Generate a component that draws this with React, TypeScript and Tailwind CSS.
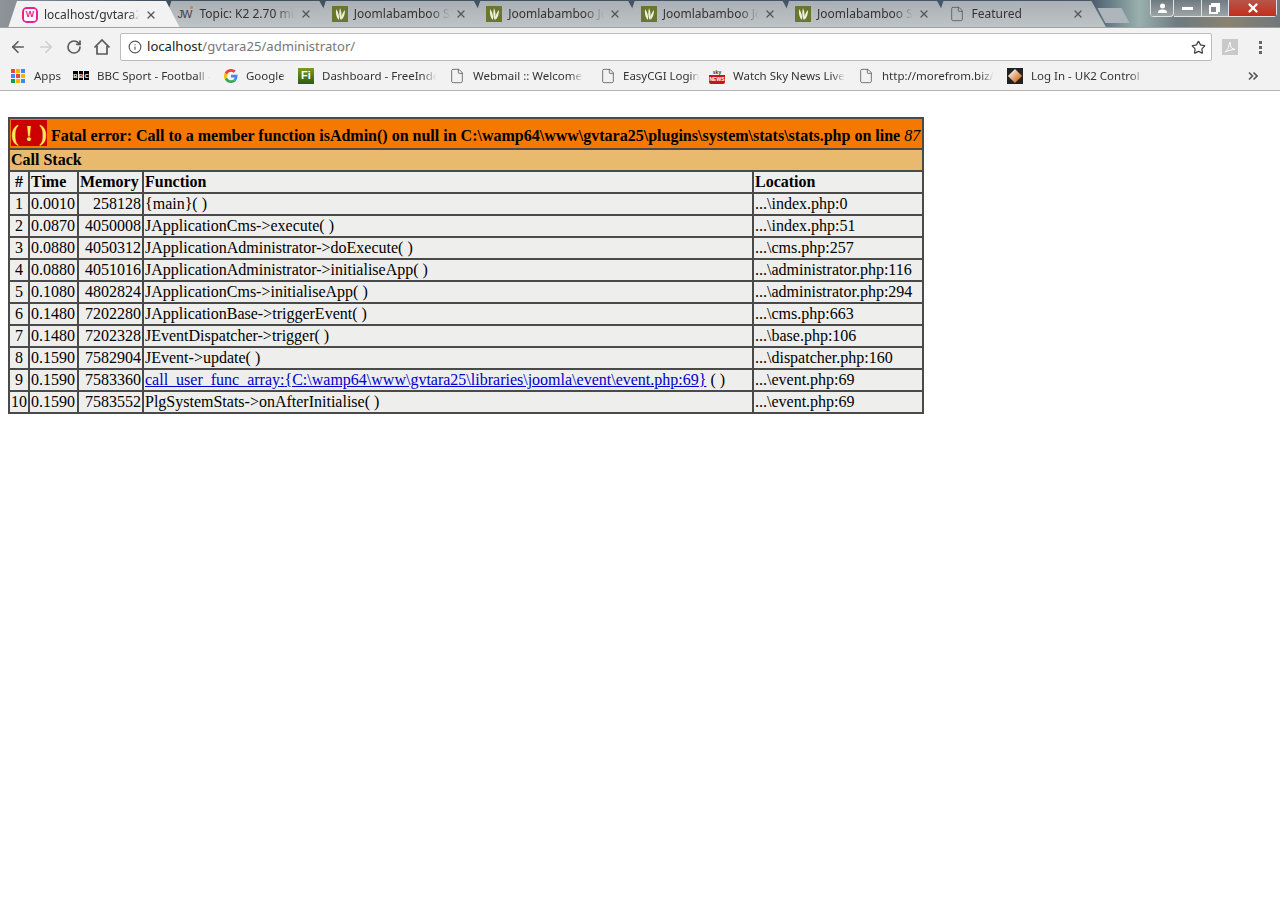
import { ArrowLeft, ArrowRight, RotateCw, Info, Star, File, X } from "lucide-react";

const tabs = [
  { icon: "jw", title: "Topic: K2 2.70 migration" },
  { icon: "bamboo", title: "Joomlabamboo Support" },
  { icon: "bamboo", title: "Joomlabamboo Joomla" },
  { icon: "bamboo", title: "Joomlabamboo Joomla" },
  { icon: "bamboo", title: "Joomlabamboo Support" },
  { icon: "file", title: "Featured" },
];

const rows = [
  ["1", "0.0010", "258128", "{main}( )", "...\\index.php:0"],
  ["2", "0.0870", "4050008", "JApplicationCms->execute( )", "...\\index.php:51"],
  ["3", "0.0880", "4050312", "JApplicationAdministrator->doExecute( )", "...\\cms.php:257"],
  ["4", "0.0880", "4051016", "JApplicationAdministrator->initialiseApp( )", "...\\administrator.php:116"],
  ["5", "0.1080", "4802824", "JApplicationCms->initialiseApp( )", "...\\administrator.php:294"],
  ["6", "0.1480", "7202280", "JApplicationBase->triggerEvent( )", "...\\cms.php:663"],
  ["7", "0.1480", "7202328", "JEventDispatcher->trigger( )", "...\\base.php:106"],
  ["8", "0.1590", "7582904", "JEvent->update( )", "...\\dispatcher.php:160"],
  ["9", "0.1590", "7583360", "LINK", "...\\event.php:69"],
  ["10", "0.1590", "7583552", "PlgSystemStats->onAfterInitialise( )", "...\\event.php:69"],
];

function BambooIcon() {
  return (
    <svg width="16" height="16" viewBox="0 0 16 16" className="shrink-0">
      <rect width="16" height="16" fill="#68762f" />
      <path d="M4 3c-.500 5 .500 9 3 11 .500-4-.500-8-3-11zM8 2c-1 4-1 8 .500 12 1.500-3 1.500-8-.500-12zM13 4c-2 2-4 6-4 10 3-2 4-6 4-10z" fill="#eef0d8" />
    </svg>
  );
}

function TabIcon({ kind }: { kind: string }) {
  if (kind === "jw") {
    return (
      <span className="relative w-4 shrink-0 font-['Liberation_Sans',sans-serif] text-[11px] leading-4 tracking-[-1px] text-[#444]">
        JW
        <span className="absolute right-0 top-0 size-[3px] rounded-full bg-[#d9822b]" />
      </span>
    );
  }
  if (kind === "bamboo") return <BambooIcon />;
  return <File size={16} strokeWidth={1.2} className="shrink-0 text-[#555]" />;
}

function Tab({ title, icon }: { title: string; icon: string }) {
  return (
    <div className="-ml-[17.6px] flex h-[27px] w-[172px] shrink-0 items-center gap-[5px] border-b border-[#9a9a9a] bg-[linear-gradient(to_bottom,#a9b0b5,#bec3c6)] pl-[15px] pr-[22px] [clip-path:polygon(0_100%,9px_0,calc(100%-15px)_0,100%_100%)]">
      <TabIcon kind={icon} />
      <span className="min-w-0 flex-1 overflow-hidden whitespace-nowrap pl-px text-[12px] text-[#333] [mask-image:linear-gradient(to_right,black_80%,transparent)]">
        {title}
      </span>
      <X size={12} strokeWidth={2.5} className="shrink-0 text-[#555]" />
    </div>
  );
}

function Bookmark({ icon, label, width, textWidth }: { icon: React.ReactNode; label: string; width: number; textWidth: number }) {
  return (
    <div className="flex shrink-0 items-center gap-[8px]" style={{ width }}>
      {icon}
      <span className="overflow-hidden whitespace-nowrap text-[11.5px] text-[#333] [mask-image:linear-gradient(to_right,black_88%,transparent)]" style={{ width: textWidth }}>{label}</span>
    </div>
  );
}

const fileIcon = <File size={16} strokeWidth={1.2} className="shrink-0 text-[#555]" />;

const appColors = ["#e8453c", "#f4b400", "#4285f4", "#4285f4", "#e8453c", "#f4b400", "#0f9d58", "#f4b400", "#4285f4"];

const thCls = "border border-[#4a4a4a] bg-[#eeeeec] p-px text-left font-bold";
const tdCls = "border border-[#4a4a4a] bg-[#eeeeec] p-px";
const ctlCls = "flex items-center justify-center border-b border-r border-[#dfe3e4] bg-[linear-gradient(to_bottom,#6f7a80,#9ca4a6)]";

export default function App() {
  return (
    <div className="min-h-[920px] bg-white font-['Noto_Sans',sans-serif]">
      {/* Tab strip */}
      <div className="flex h-[28px] overflow-hidden border-b border-[#a0a0a0] bg-[linear-gradient(to_right,#8c9399_0%,#858e95_2%,#3f4f5e_12%,#45576a_85%,#9ab0ad_89%,#6d7a80_92%,#8a8270_96%,#70787c_100%)] pl-[8px] pt-[1px]">
        <div className="z-10 flex h-[27px] w-[172px] shrink-0 items-center gap-[6px] bg-[#f2f2f2] pl-[14px] pr-[8px] [clip-path:polygon(0_100%,9px_0,calc(100%-14px)_0,100%_100%)]">
          <span className="flex size-4 shrink-0 items-center justify-center rounded-[5px] bg-[#ec1c9a] p-[2px]">
            <span className="flex size-full items-center justify-center rounded-[2px] bg-white font-['Liberation_Sans',sans-serif] text-[9px] font-bold leading-none text-[#ec1c9a]">W</span>
          </span>
          <span className="min-w-0 flex-1 overflow-hidden whitespace-nowrap text-[12px] text-[#333] [mask-image:linear-gradient(to_right,black_90%,transparent)]">localhost/gvtara25/administrator</span>
          <X size={12} strokeWidth={2.5} className="mr-[15px] shrink-0 text-[#555]" />
        </div>
        {tabs.map((t, i) => (
          <Tab key={i} title={t.title} icon={t.icon} />
        ))}
        <div className="-ml-[9px] mt-[7px] h-[15px] w-[32px] shrink-0 bg-[#aeb6bb] [clip-path:polygon(0_0,75%_0,100%_100%,25%_100%)]" />
        {/* Window controls */}
        <div className="relative flex-1">
          <div className="absolute right-[3px] -top-px flex h-[17px] w-[127px] overflow-hidden rounded-b-[4px] border-l border-[#dfe3e4]">
            <div className={`${ctlCls} w-[23px] rounded-br-[4px]`}>
              <svg width="11" height="10" viewBox="0 0 11 10"><circle cx="5.500" cy="3" r="2.500" fill="white" /><path d="M1 10c0-3 2-3.500 4.500-3.500S10 7 10 10z" fill="white" /></svg>
            </div>
            <div className={`${ctlCls} w-[28px]`}><span className="h-[3px] w-[11px] bg-white" /></div>
            <div className={`${ctlCls} relative w-[27px]`}>
              <span className="absolute left-[9px] top-[3px] size-[9px] border-2 border-white" />
              <span className="absolute left-[7px] top-[5px] size-[9px] border-2 border-white bg-[#7f898e]" />
            </div>
            <div className="flex flex-1 items-center justify-center border-b border-r border-[#dfe3e4] bg-[linear-gradient(to_bottom,#b5564a,#c42e1c)]"><X size={14} strokeWidth={4} className="text-white" /></div>
          </div>
        </div>
      </div>

      {/* Toolbar */}
      <div className="flex h-[34px] items-center bg-[#f2f2f2] pl-[9px] pt-[4px]">
        <ArrowLeft size={18} strokeWidth={2.2} className="text-[#5a5a5a]" />
        <ArrowRight size={18} strokeWidth={2.2} className="ml-[10px] text-[#cfcfcf]" />
        <RotateCw size={16} strokeWidth={2.5} className="ml-[11px] text-[#5a5a5a]" />
        <svg width="18" height="18" viewBox="0 0 18 18" className="ml-[11px]" fill="none" stroke="#5a5a5a" strokeWidth="1.700">
          <path d="M1.500 9.500 9 2l7.500 7.500" />
          <path d="M4 8v8h10V8" />
        </svg>
        <div className="ml-[9px] flex h-[28px] w-[1092px] items-center rounded-[2px] border border-[#bcbcbc] bg-white pl-[7px] pr-[5px]">
          <Info size={14} strokeWidth={2} className="text-[#5a5a5a]" />
          <span className="ml-[5px] text-[13.1px] text-[#222]">localhost</span>
          <span className="text-[13.1px] text-[#777]">/gvtara25/administrator/</span>
          <Star size={15} strokeWidth={2} className="ml-auto text-[#444]" />
        </div>
        <div className="ml-[10px] flex size-4 items-center justify-center bg-[#c9c9c9]">
          <svg width="12" height="12" viewBox="0 0 12 12" fill="none" stroke="white" strokeWidth="1">
            <path d="M1 11c2-1 4-5 4.500-9 .200-1.500 1-1 .800.500C6 6 8 8 11 8.500c-3 0-7 1-10 2.500z" />
          </svg>
        </div>
        <div className="ml-[21px] flex flex-col gap-[2px]">
          <span className="size-[3px] bg-[#666]" />
          <span className="size-[3px] bg-[#666]" />
          <span className="size-[3px] bg-[#666]" />
        </div>
      </div>

      {/* Bookmarks */}
      <div className="flex h-[29px] items-center border-b border-[#b4b4b4] bg-[#f2f2f2] pb-[1px] pl-[11px]">
        <Bookmark width={62} textWidth={30} label="Apps" icon={
          <div className="mr-px grid size-[14px] shrink-0 grid-cols-3 gap-px">
            {appColors.map((c, i) => <span key={i} style={{ backgroundColor: c }} />)}
          </div>
        } />
        <Bookmark width={151} textWidth={113} label="BBC Sport - Football - BBC" icon={
          <span className="flex h-[9px] w-4 shrink-0 gap-px">
            {["B", "B", "C"].map((c, i) => <span key={i} className="flex w-[5px] items-center justify-center bg-black font-['Liberation_Sans',sans-serif] text-[6px] font-bold leading-none text-white">{c}</span>)}
          </span>
        } />
        <Bookmark width={74} textWidth={40} label="Google" icon={
          <svg width="14" height="14" viewBox="0 0 48 48" className="shrink-0">
            <path fill="#EA4335" d="M24 9.500c3.500 0 6.700 1.200 9.200 3.600l6.900-6.900C35.900 2.400 30.500 0 24 0 14.600 0 6.500 5.400 2.600 13.200l8 6.200C12.500 13.700 17.800 9.500 24 9.500z" />
            <path fill="#4285F4" d="M46.500 24.500c0-1.600-.100-3.100-.400-4.500H24v9h12.700c-.500 2.900-2.200 5.400-4.700 7l7.300 5.700c4.300-4 6.700-9.900 6.700-17.200z" />
            <path fill="#FBBC05" d="M10.600 28.600c-.500-1.400-.800-3-.800-4.600s.300-3.200.800-4.600l-8-6.200C.900 16.500 0 20.100 0 24s.900 7.500 2.600 10.800l8-6.200z" />
            <path fill="#34A853" d="M24 48c6.500 0 11.900-2.100 15.900-5.800L32 36.500c-2.100 1.400-4.900 2.300-8 2.300-6.200 0-11.500-4.200-13.400-9.900l-8 6.200C6.500 42.600 14.600 48 24 48z" />
          </svg>
        } />
        <Bookmark width={151} textWidth={114} label="Dashboard - FreeIndex" icon={
          <span className="flex size-4 shrink-0 items-center justify-center bg-[linear-gradient(to_bottom,#7f9a20,#2f5a10)] font-['Liberation_Sans',sans-serif] text-[11px] font-bold leading-none text-white">Fi</span>
        } />
        <Bookmark width={151} textWidth={110} label="Webmail :: Welcome to" icon={fileIcon} />
        <Bookmark width={109} textWidth={76} label="EasyCGI Login" icon={<File size={16} strokeWidth={1.2} className="-mr-[1px] shrink-0 text-[#555]" />} />
        <Bookmark width={149} textWidth={112} label="Watch Sky News Live" icon={
          <span className="flex h-4 w-4 shrink-0 flex-col items-center overflow-hidden rounded-[2px] font-['Liberation_Sans',sans-serif] text-[5px] font-bold leading-[8px]">
            <span className="h-[7px] text-[#333]">sky</span>
            <span className="h-[9px] w-full bg-[#c4161c] text-center text-white">NEWS</span>
          </span>
        } />
        <Bookmark width={149} textWidth={112} label="http://morefrom.biz/morefrom" icon={fileIcon} />
        <Bookmark width={137} textWidth={113} label="Log In - UK2 Control Panel" icon={
          <span className="flex size-4 shrink-0 items-center justify-center bg-[#222]"><span className="size-[10px] rotate-45 bg-[linear-gradient(to_right,#f0e0d0,#d9772b)]" /></span>
        } />
        <svg width="10" height="10" viewBox="0 0 10 10" fill="none" stroke="#555" strokeWidth="1.600" className="ml-[104px] shrink-0">
          <path d="M1 1.500 4.500 5 1 8.500M5.500 1.500 9 5 5.500 8.500" />
        </svg>
      </div>

      {/* Page */}
      <table className="ml-2 mt-[26px] w-[916px] table-fixed border-separate border-spacing-0 border border-[#4a4a4a] font-['Liberation_Serif',serif] text-[16px] leading-[18px] text-black">
        <colgroup>
          <col className="w-[20px]" />
          <col className="w-[49px]" />
          <col className="w-[65px]" />
          <col className="w-[610px]" />
          <col className="w-[170px]" />
        </colgroup>
        <tbody>
          <tr>
            <th colSpan={5} className="whitespace-nowrap border border-[#4a4a4a] bg-[#f57900] p-px text-left font-bold">
              <span className="bg-[#cc0000] text-[24px] leading-[27px] text-[#fce94f]">( ! )</span> Fatal error: Call to a member function isAdmin() on null in C:\wamp64\www\gvtara25\plugins\system\stats\stats.php on line <i className="font-normal">87</i>
            </th>
          </tr>
          <tr>
            <th colSpan={5} className="border border-[#4a4a4a] bg-[#e9b96e] p-px text-left font-bold">Call Stack</th>
          </tr>
          <tr>
            <th className="border border-[#4a4a4a] bg-[#eeeeec] p-px text-center font-bold">#</th>
            <th className={thCls}>Time</th>
            <th className={thCls}>Memory</th>
            <th className={thCls}>Function</th>
            <th className={thCls}>Location</th>
          </tr>
          {rows.map((r) => (
            <tr key={r[0]}>
              <td className={`${tdCls} text-center`}>{r[0]}</td>
              <td className={tdCls}>{r[1]}</td>
              <td className={`${tdCls} text-right`}>{r[2]}</td>
              <td className={`${tdCls} whitespace-nowrap`}>
                {r[3] === "LINK" ? (
                  <>
                    <a className="text-[#0000cc] underline">call_user_func_array:{"{C:\\wamp64\\www\\gvtara25\\libraries\\joomla\\event\\event.php:69}"}</a> ( )
                  </>
                ) : r[3]}
              </td>
              <td className={tdCls}>{r[4]}</td>
            </tr>
          ))}
        </tbody>
      </table>
    </div>
  );
}
